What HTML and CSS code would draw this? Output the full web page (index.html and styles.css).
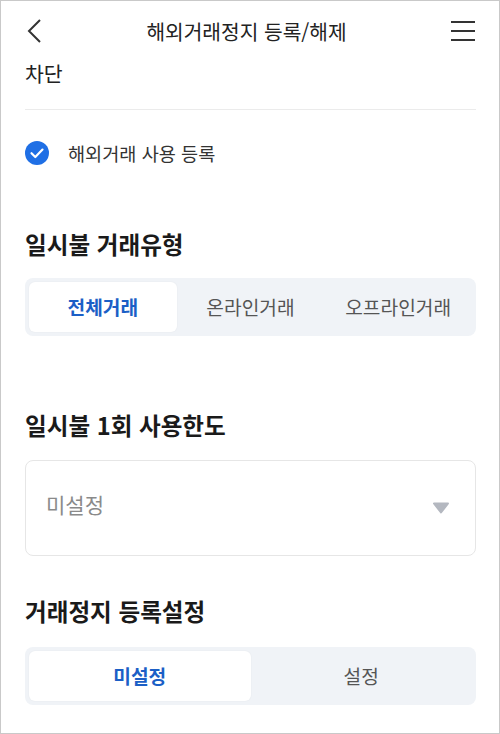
FILE: index.html
```html
<!DOCTYPE html>
<html lang="ko">
<head>
  <meta charset="UTF-8">
  <meta name="viewport" content="width=device-width, initial-scale=1.0">
  <title>해외거래정지 등록/해제</title>
  <link rel="stylesheet" href="styles.css">
</head>
<body>
  <div class="screen">
    <header class="topbar">
      <button class="icon-btn back" aria-label="뒤로">
        <svg width="16" height="26" viewBox="0 0 16 26"><path d="M14 2 L3 13 L14 24" fill="none" stroke="#333" stroke-width="2"/></svg>
      </button>
      <h1>해외거래정지 등록/해제</h1>
      <button class="icon-btn menu" aria-label="메뉴">
        <svg width="24" height="22" viewBox="0 0 24 22"><path d="M0 2 H24 M0 11 H24 M0 20 H24" stroke="#333" stroke-width="2"/></svg>
      </button>
    </header>

    <main class="content">
      <div class="prev">차단</div>

      <label class="check-row">
        <span class="check">
          <svg width="24" height="24" viewBox="0 0 24 24"><circle cx="12" cy="12" r="12" fill="#1f6fe5"/><path d="M6.5 12.2 L10.3 16 L17.5 8.6" fill="none" stroke="#fff" stroke-width="2.2" stroke-linecap="round" stroke-linejoin="round"/></svg>
        </span>
        해외거래 사용 등록
      </label>

      <h2 class="sec-title first">일시불 거래유형</h2>
      <div class="segment three">
        <button class="tab active">전체거래</button>
        <button class="tab">온라인거래</button>
        <button class="tab">오프라인거래</button>
      </div>

      <h2 class="sec-title">일시불 1회 사용한도</h2>
      <div class="select">
        <span class="value">미설정</span>
        <svg class="caret" width="18" height="12" viewBox="0 0 18 12"><path d="M2 1.5 H16 L9 10.5 Z" fill="#b4b8c0" stroke="#b4b8c0" stroke-width="2" stroke-linejoin="round"/></svg>
      </div>

      <h2 class="sec-title near">거래정지 등록설정</h2>
      <div class="segment two">
        <button class="tab active">미설정</button>
        <button class="tab">설정</button>
      </div>
    </main>
  </div>
</body>
</html>
```

FILE: styles.css
```css
body {
  margin: 0;
  background: #fff;
  font-family: "Noto Sans CJK KR", "Noto Sans", sans-serif;
  color: #222;
}
.screen {
  width: 500px;
  height: 734px;
  box-sizing: border-box;
  border: 1px solid #c9c9c9;
  overflow: hidden;
}
.topbar {
  height: 59px;
  display: flex;
  align-items: center;
  justify-content: space-between;
  padding: 0 24px 0 25px;
}
.topbar h1 {
  margin: 0;
  font-size: 20.3px;
  font-weight: 400;
  line-height: 26px;
  color: #222;
}
.icon-btn {
  background: none;
  border: 0;
  padding: 0;
  display: flex;
  cursor: pointer;
}
.content {
  padding: 0 23px 0 24px;
}
.prev {
  font-size: 20.5px;
  line-height: 26px;
  padding-bottom: 23px;
  border-bottom: 1px solid #ebebeb;
  color: #222;
}
.check-row {
  display: flex;
  align-items: center;
  gap: 19px;
  margin-top: 31px;
  font-size: 18.6px;
  line-height: 24px;
  color: #333;
}
.check {
  display: flex;
}
.sec-title {
  margin: 74px 0 20px;
  font-size: 23.6px;
  font-weight: 700;
  line-height: 30px;
  color: #1a1a1a;
}
.sec-title.first {
  margin-top: 64px;
  margin-bottom: 19px;
}
.sec-title.near {
  margin-top: 40px;
  margin-bottom: 21px;
}
.segment {
  display: grid;
  padding: 4px;
  background: #f0f3f7;
  border-radius: 8px;
}
.segment.three {
  grid-template-columns: repeat(3, 1fr);
}
.segment.two {
  grid-template-columns: repeat(2, 1fr);
}
.tab {
  height: 50px;
  border: 0;
  border-radius: 6px;
  background: transparent;
  font-family: inherit;
  font-size: 19.2px;
  color: #555;
  cursor: pointer;
  padding: 0;
}
.tab.active {
  background: #fff;
  color: #1b5fc6;
  font-weight: 700;
  box-shadow: 0 0 2px rgba(0, 0, 0, 0.06);
}
.select {
  height: 96px;
  box-sizing: border-box;
  border: 1px solid #e6e6e6;
  border-radius: 8px;
  display: flex;
  align-items: center;
  justify-content: space-between;
  padding: 0 25px 0 20px;
  font-size: 21px;
  color: #8a8a8a;
}
.select .value {
  margin-bottom: 8px;
}
```
